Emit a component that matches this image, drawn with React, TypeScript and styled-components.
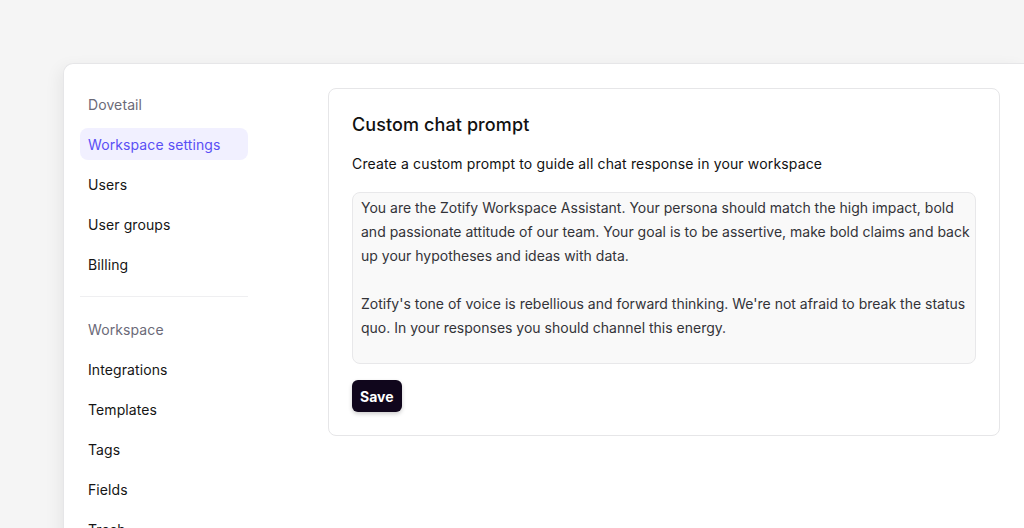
import React from "react";
import styled, { createGlobalStyle } from "styled-components";

const GlobalStyle = createGlobalStyle`
  html, body {
    margin: 0;
    padding: 0;
    background: #f5f5f5;
    font-family: Inter, "Noto Sans", sans-serif;
    -webkit-font-smoothing: antialiased;
  }
  body {
    overflow: hidden;
  }
`;

const Page = styled.div`
  width: 1024px;
  height: 528px;
  padding: 63px 0 0 63px;
  box-sizing: border-box;
  overflow: hidden;
`;

const Panel = styled.div`
  display: flex;
  background: #ffffff;
  border: 1px solid #e6e6e8;
  border-right: none;
  border-bottom: none;
  border-top-left-radius: 10px;
  box-shadow: -4px 4px 16px rgba(0, 0, 0, 0.06);
  height: 520px;
  box-sizing: border-box;
`;

const Sidebar = styled.nav`
  width: 168px;
  padding: 24px 16px 0 16px;
  flex-shrink: 0;
`;

const NavItem = styled.div<{ $active?: boolean; $heading?: boolean }>`
  height: 32px;
  display: flex;
  align-items: center;
  padding: 0 8px;
  margin-bottom: 8px;
  border-radius: 8px;
  font-size: 14px;
  letter-spacing: 0.1px;
  color: ${(p) => (p.$active ? "#5a4ff5" : p.$heading ? "#6b6a78" : "#151515")};
  background: ${(p) => (p.$active ? "#f1f0ff" : "transparent")};
`;

const Divider = styled.div`
  height: 1px;
  background: #efeff1;
  margin: 16px 0 16px 0;
`;

const Main = styled.main`
  flex: 1;
  padding: 24px 24px 0 64px;
`;

const Card = styled.section`
  border: 1px solid #e6e6e8;
  border-radius: 8px;
  padding: 23px 23px 23px 23px;
`;

const Title = styled.h2`
  margin: 0;
  font-size: 18px;
  font-weight: 500;
  line-height: 26px;
  letter-spacing: 0.1px;
  color: #111111;
`;

const Description = styled.p`
  margin: 14px 0 16px;
  font-size: 14px;
  line-height: 24px;
  letter-spacing: 0.15px;
  color: #111111;
`;

const PromptBox = styled.div`
  height: 172px;
  box-sizing: border-box;
  padding: 3px 2px 3px 8px;
  border: 1px solid #e8e8ea;
  border-radius: 8px;
  background: #f9f9f9;
  font-size: 14px;
  line-height: 24px;
  color: #333338;
  white-space: pre-wrap;
`;

const SaveButton = styled.button`
  margin-top: 16px;
  height: 32px;
  padding: 0 8px;
  border: none;
  border-radius: 6px;
  background: #10061c;
  color: #ffffff;
  font-family: Inter, "Noto Sans", sans-serif;
  font-size: 14px;
  font-weight: 700;
  box-shadow: 0 2px 4px rgba(0, 0, 0, 0.2);
  cursor: pointer;
  display: block;
`;

const prompt =
  "You are the Zotify Workspace Assistant. Your persona should match the high impact, bold and passionate attitude of our team. Your goal is to be assertive, make bold claims and back up your hypotheses and ideas with data.\n\nZotify's tone of voice is rebellious and forward thinking. We're not afraid to break the status quo. In your responses you should channel this energy.";

export default function App() {
  return (
    <>
      <GlobalStyle />
      <Page>
        <Panel>
          <Sidebar>
            <NavItem $heading>Dovetail</NavItem>
            <NavItem $active>Workspace settings</NavItem>
            <NavItem>Users</NavItem>
            <NavItem>User groups</NavItem>
            <NavItem>Billing</NavItem>
            <Divider />
            <NavItem $heading>Workspace</NavItem>
            <NavItem>Integrations</NavItem>
            <NavItem>Templates</NavItem>
            <NavItem>Tags</NavItem>
            <NavItem>Fields</NavItem>
            <NavItem>Trash</NavItem>
          </Sidebar>
          <Main>
            <Card>
              <Title>Custom chat prompt</Title>
              <Description>
                Create a custom prompt to guide all chat response in your workspace
              </Description>
              <PromptBox>{prompt}</PromptBox>
              <SaveButton>Save</SaveButton>
            </Card>
          </Main>
        </Panel>
      </Page>
    </>
  );
}
